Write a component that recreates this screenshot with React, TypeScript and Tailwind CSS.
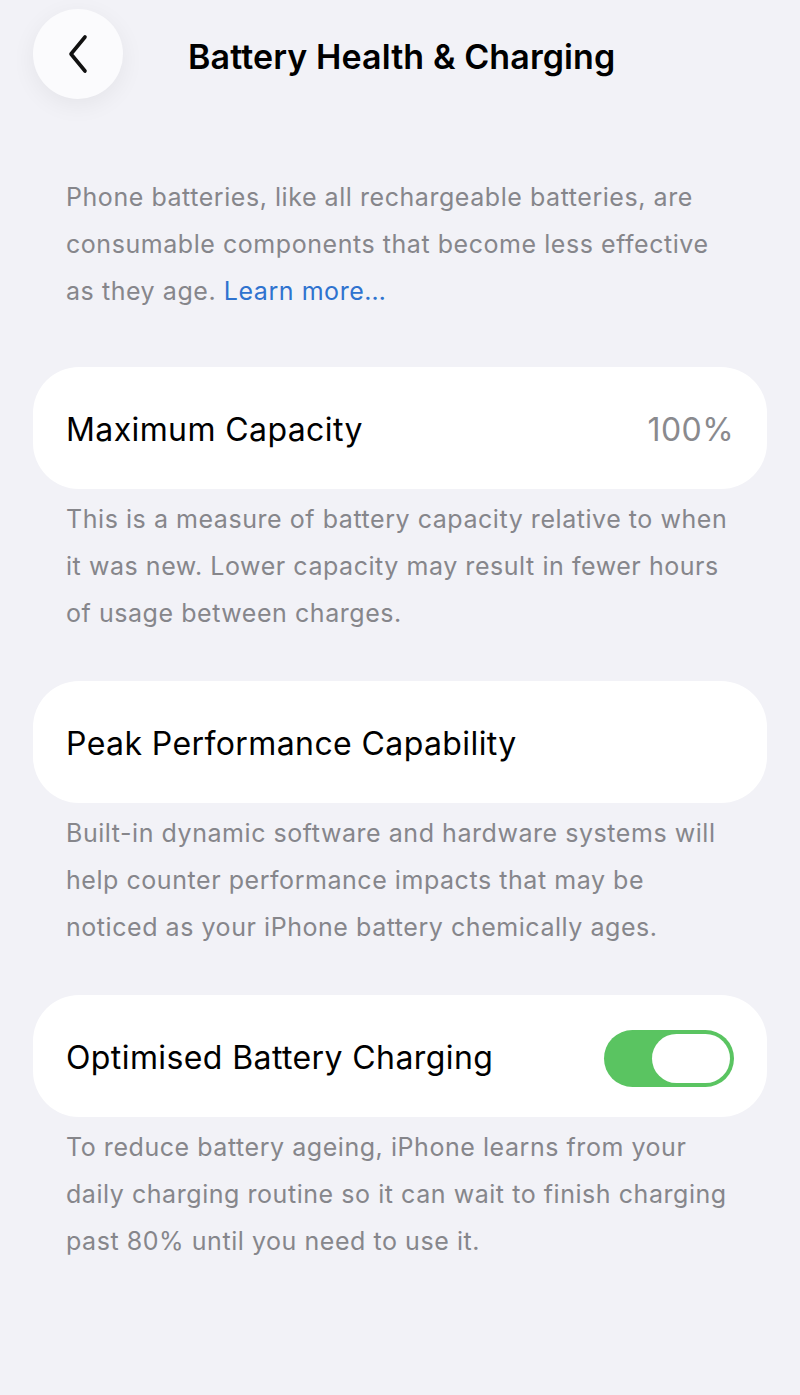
import React from 'react';

function BackButton() {
  return (
    <button className="flex h-[90px] w-[90px] items-center justify-center rounded-full bg-[#fbfbfd] shadow-[0_6px_24px_rgba(0,0,0,0.06)]">
      <svg width="28" height="40" viewBox="0 0 28 40" fill="none">
        <path d="M21 3 L7 20 L21 37" stroke="#111" strokeWidth="3.6" strokeLinecap="round" strokeLinejoin="round" />
      </svg>
    </button>
  );
}

function Toggle() {
  return (
    <div className="flex h-[57px] w-[130px] items-center justify-end rounded-full bg-[#5ac461] p-[4px]">
      <div className="h-[49px] w-[78px] rounded-full bg-white" />
    </div>
  );
}

function Card({ children }: { children: React.ReactNode }) {
  return (
    <div className="flex h-[122px] items-center justify-between rounded-[46px] bg-white px-[33px] pt-[4px] text-[32px] tracking-[0.4px] text-black">
      {children}
    </div>
  );
}

function Footer({ children }: { children: React.ReactNode }) {
  return (
    <p className="mt-[7px] px-[33px] text-[25px] leading-[47px] tracking-[0.55px] text-[#86868b]">{children}</p>
  );
}

export default function App() {
  return (
    <div className="min-h-[1395px] w-[800px] bg-[#f2f2f7] font-['Inter',sans-serif]">
      <header className="flex items-center pl-[33px] pt-[9px]">
        <BackButton />
        <h1 className="ml-[65px] pt-[4px] text-[34px] font-semibold tracking-[0.1px] text-black">
          Battery Health &amp; Charging
        </h1>
      </header>

      <div className="px-[33px]">
        <p className="mt-[75px] px-[33px] text-[25px] leading-[47px] tracking-[0.55px] text-[#86868b]">
          Phone batteries, like all rechargeable batteries, are consumable components that become less effective as they age.{' '}
          <span className="text-[#2f73cf]">Learn more…</span>
        </p>

        <div className="mt-[52px]">
          <Card>
            <span>Maximum Capacity</span>
            <span className="text-[#8a8a8e]">100%</span>
          </Card>
          <Footer>
            This is a measure of battery capacity relative to when it was new. Lower capacity may result in fewer hours of usage between charges.
          </Footer>
        </div>

        <div className="mt-[44px]">
          <Card>
            <span>Peak Performance Capability</span>
          </Card>
          <Footer>
            Built-in dynamic software and hardware systems will help counter performance impacts that may be noticed as your iPhone battery chemically ages.
          </Footer>
        </div>

        <div className="mt-[44px]">
          <Card>
            <span>Optimised Battery Charging</span>
            <Toggle />
          </Card>
          <Footer>
            To reduce battery ageing, iPhone learns from your daily charging routine so it can wait to finish charging past 80% until you need to use it.
          </Footer>
        </div>
      </div>
    </div>
  );
}
